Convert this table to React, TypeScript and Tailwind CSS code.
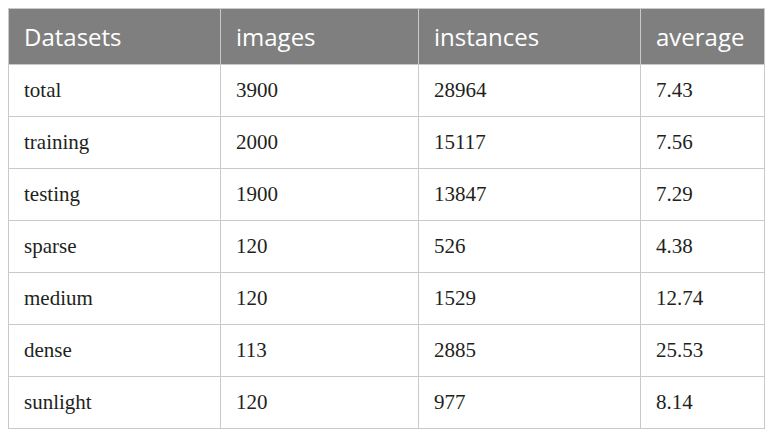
const columns = ["Datasets", "images", "instances", "average"];

const rows = [
  ["total", "3900", "28964", "7.43"],
  ["training", "2000", "15117", "7.56"],
  ["testing", "1900", "13847", "7.29"],
  ["sparse", "120", "526", "4.38"],
  ["medium", "120", "1529", "12.74"],
  ["dense", "113", "2885", "25.53"],
  ["sunlight", "120", "977", "8.14"],
];

const widths = ["w-[212px]", "w-[198px]", "w-[222px]", "w-[124px]"];

const App = () => {
  return (
    <div className="w-[772px] h-[436px] bg-white pt-[8px] pl-[8px]">
      <table className="border-collapse table-fixed w-[756px]">
        <thead>
          <tr className="h-[56px] bg-[#7f7f7f]">
            {columns.map((col, i) => (
              <th
                key={col}
                className={`${widths[i]} border border-[#c9c9c9] pl-[15px] pr-2 text-left font-normal text-white text-[24px] font-['Open_Sans',sans-serif]`}
              >
                {col}
              </th>
            ))}
          </tr>
        </thead>
        <tbody>
          {rows.map((row, index) => (
            <tr className="h-[52px]" key={index}>
              {row.map((cell, i) => (
                <td
                  key={i}
                  className="border border-[#c9c9c9] pl-[15px] pr-2 text-left text-[21px] text-[#231f20] font-['Liberation_Serif',serif]"
                >
                  {cell}
                </td>
              ))}
            </tr>
          ))}
        </tbody>
      </table>
    </div>
  );
};

export default App;
